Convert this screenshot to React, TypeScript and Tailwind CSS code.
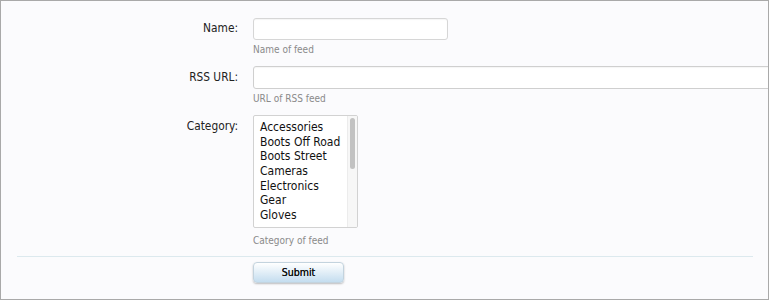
import React from "react";

const items = [
  "Accessories",
  "Boots Off Road",
  "Boots Street",
  "Cameras",
  "Electronics",
  "Gear",
  "Gloves",
];

const font = '"DejaVu Sans Condensed", "Liberation Sans", Arial, sans-serif';

export default function App() {
  return (
    <div
      className="w-[769px] h-[300px] overflow-hidden border border-[#a9a9a9] bg-[#fbfbfd] text-[#333]"
      style={{ fontFamily: font }}
    >
      <div className="pt-[17px]">
        {/* Name */}
        <div className="grid grid-cols-[237px_1fr] gap-x-[15px]">
          <div className="flex h-[22px] items-center justify-end text-[11.8px] text-[#222]">Name:</div>
          <div>
            <div className="h-[22px] w-[195px] rounded-[3px] border border-[#d6d6d6] bg-white shadow-[inset_0_1px_1px_rgba(0,0,0,0.04)]" />
            <div className="mt-[4px] h-[12px] text-[10px] leading-[12px] text-[#8a8a8a]">Name of feed</div>
          </div>
        </div>

        {/* RSS URL */}
        <div className="mt-[10px] grid grid-cols-[237px_1fr] gap-x-[15px]">
          <div className="flex h-[23px] items-center justify-end text-[11.8px] text-[#222]">RSS URL:</div>
          <div>
            <div className="h-[23px] w-[540px] rounded-[3px] border border-[#cfcfcf] bg-white shadow-[inset_0_1px_1px_rgba(0,0,0,0.04)]" />
            <div className="mt-[4px] h-[12px] text-[10px] leading-[12px] text-[#8a8a8a]">URL of RSS feed</div>
          </div>
        </div>

        {/* Category */}
        <div className="mt-[10px] grid grid-cols-[237px_1fr] gap-x-[15px]">
          <div className="flex justify-end pt-[4px] text-[11.8px] leading-[15px] text-[#222]">Category:</div>
          <div>
            <div className="flex h-[113px] w-[105px] overflow-hidden rounded-[2px] border border-[#d2d2d2] bg-white">
              <div className="flex-1 overflow-hidden pl-[6px] pt-[4px]">
                {items.map((it) => (
                  <div key={it} className="whitespace-nowrap text-[12px] leading-[14.65px] text-[#111]">
                    {it}
                  </div>
                ))}
              </div>
              <div className="flex w-[10px] justify-center border-l border-[#ececec] bg-[#f7f7f7] pt-[2px]">
                <div className="h-[51px] w-[5px] rounded-[3px] bg-[#c2c2c2]" />
              </div>
            </div>
            <div className="mt-[7px] h-[12px] text-[10px] leading-[12px] text-[#8a8a8a]">Category of feed</div>
          </div>
        </div>

        {/* Separator */}
        <div className="ml-[16px] mt-[9px] h-px w-[736px] bg-[#dce9ee]" />

        {/* Submit */}
        <div className="mt-[5px] pl-[252px]">
          <button className="flex h-[21px] w-[91px] items-center justify-center rounded-[4px] border border-[#c3d3de] bg-gradient-to-b from-[#ffffff] to-[#c4ddef] text-[10.5px] text-[#111] shadow-[0_1px_2px_rgba(0,0,0,0.25)] [text-shadow:0_0_0.3px_#111]">
            Submit
          </button>
        </div>
      </div>
    </div>
  );
}
